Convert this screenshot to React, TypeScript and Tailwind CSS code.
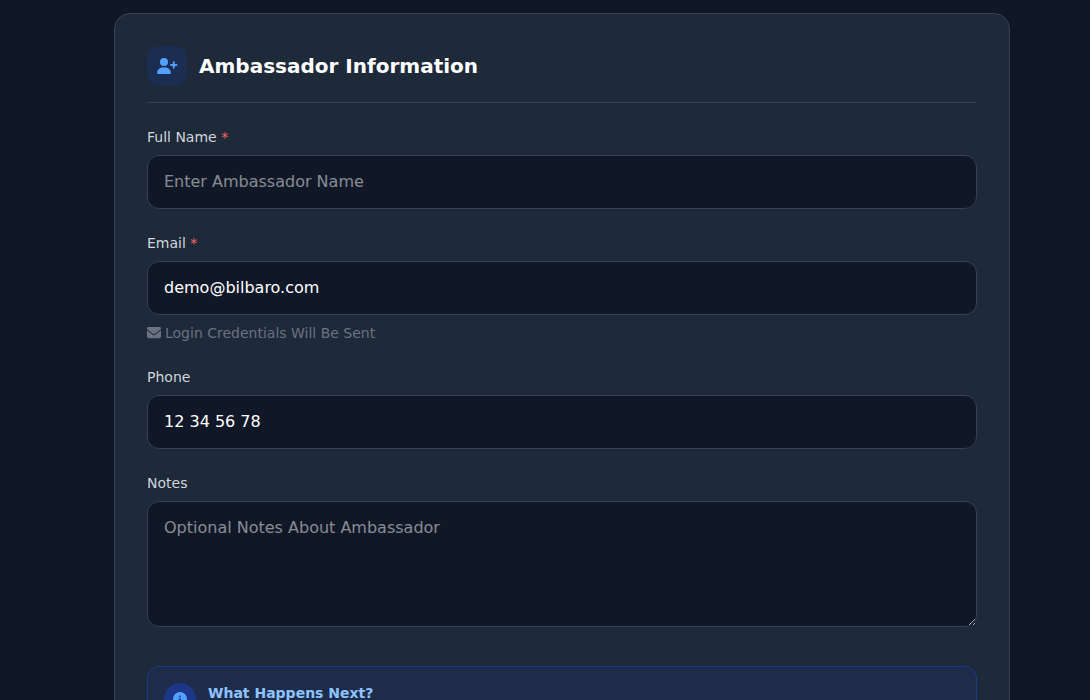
import { FaCircleInfo, FaEnvelope } from "react-icons/fa6";

const inputClass =
  "block w-full px-4 py-3.5 rounded-xl border border-gray-700 bg-gray-900 text-white focus:outline-none";

const labelClass = "block text-sm font-medium text-gray-300 mb-2";

function UserPlusIcon({ className }: { className?: string }) {
  return (
    <svg viewBox="0 0 640 512" fill="currentColor" className={className}>
      <path d="M96 128a128 128 0 1 1 256 0A128 128 0 1 1 96 128zM0 482.3C0 383.8 79.8 304 178.3 304h91.4C368.2 304 448 383.8 448 482.3c0 16.4-13.3 29.7-29.7 29.7H29.7C13.3 512 0 498.7 0 482.3z" />
      <path
        d="M448 224h176M536 136v176"
        fill="none"
        stroke="currentColor"
        strokeWidth="58"
        strokeLinecap="round"
      />
    </svg>
  );
}

export default function App() {
  return (
    <div className="h-screen overflow-hidden bg-gray-900 pt-[13px] pl-[114px] pr-20 font-['DejaVu_Sans',sans-serif]">
      <div className="w-[896px] rounded-2xl border border-gray-700 bg-gray-800 p-8 shadow-xl">
        <div className="flex items-center gap-3 pb-4 mb-6 border-b border-gray-700">
          <div className="w-10 h-10 rounded-xl bg-blue-900/30 flex items-center justify-center">
            <UserPlusIcon className="w-5 h-4 overflow-visible text-blue-400" />
          </div>
          <h2 className="text-xl font-bold text-white">
            Ambassador Information
          </h2>
        </div>

        <form className="space-y-6">
          <div>
            <label className={labelClass}>
              Full Name <span className="text-red-400">*</span>
            </label>
            <input
              type="text"
              placeholder="Enter Ambassador Name"
              className={inputClass}
            />
          </div>

          <div>
            <label className={labelClass}>
              Email <span className="text-red-400">*</span>
            </label>
            <input
              type="email"
              defaultValue="demo@bilbaro.com"
              className={inputClass}
            />
            <p className="mt-2 flex items-center gap-1 text-sm text-gray-500">
              <FaEnvelope
                className="w-3.5 h-[15px] mb-px"
                preserveAspectRatio="none"
              />
              Login Credentials Will Be Sent
            </p>
          </div>

          <div>
            <label className={labelClass}>Phone</label>
            <input
              type="tel"
              defaultValue="12 34 56 78"
              className={inputClass}
            />
          </div>

          <div>
            <label className={labelClass}>Notes</label>
            <textarea
              rows={4}
              placeholder="Optional Notes About Ambassador"
              className={inputClass}
            />
          </div>
        </form>

        <div className="mt-[39px] rounded-xl border border-blue-900 bg-blue-900/20 p-4">
          <div className="flex items-start gap-3">
            <div className="w-8 h-8 shrink-0 rounded-full bg-blue-900/90 flex items-center justify-center">
              <FaCircleInfo className="w-3.5 h-3.5 text-blue-400" />
            </div>
            <div>
              <h3 className="text-sm font-bold text-blue-300">
                What Happens Next?
              </h3>
            </div>
          </div>
        </div>
      </div>
    </div>
  );
}
